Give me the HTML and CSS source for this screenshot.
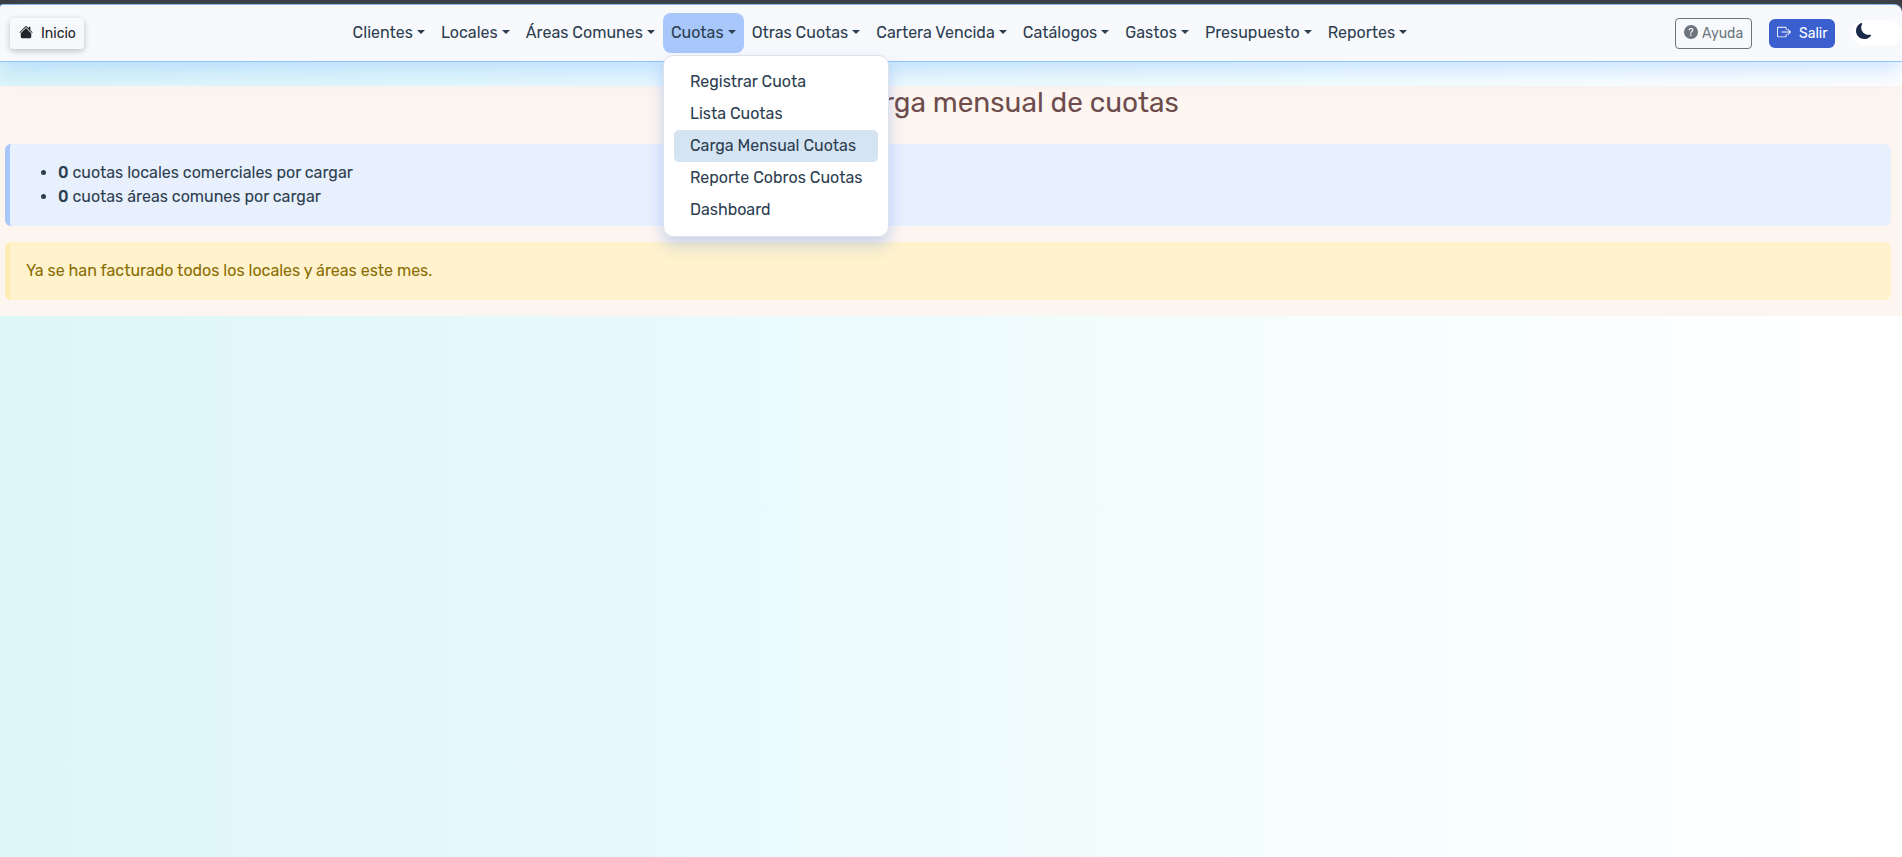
FILE: index.html
```html
<!DOCTYPE html>
<html lang="es">
<head>
<meta charset="utf-8">
<title>Carga mensual de cuotas</title>
<link rel="stylesheet" href="styles.css">
</head>
<body>
<div class="topbar">
<nav class="navbar">
  <a class="btn btn-home"><svg viewBox="0 0 16 16" width="14" height="14" fill="currentColor"><path d="M8.707 1.5a1 1 0 0 0-1.414 0L.646 8.146a.5.5 0 0 0 .708.708L8 2.207l6.646 6.647a.5.5 0 0 0 .708-.708L13 5.793V2.5a.5.5 0 0 0-.5-.5h-1a.5.5 0 0 0-.5.5v1.293z"/><path d="m8 3.293 6 6V13.5a1.500 1.500 0 0 1-1.500 1.500h-9A1.500 1.500 0 0 1 2 13.500V9.293z"/></svg><span>Inicio</span></a>
  <ul class="menu">
    <li class="item"><span>Clientes</span></li>
    <li class="item"><span>Locales</span></li>
    <li class="item"><span>Áreas Comunes</span></li>
    <li class="item active"><span>Cuotas</span>
      <ul class="dropdown">
        <li>Registrar Cuota</li>
        <li>Lista Cuotas</li>
        <li class="current">Carga Mensual Cuotas</li>
        <li>Reporte Cobros Cuotas</li>
        <li>Dashboard</li>
      </ul>
    </li>
    <li class="item"><span>Otras Cuotas</span></li>
    <li class="item"><span>Cartera Vencida</span></li>
    <li class="item"><span>Catálogos</span></li>
    <li class="item"><span>Gastos</span></li>
    <li class="item"><span>Presupuesto</span></li>
    <li class="item"><span>Reportes</span></li>
  </ul>
  <div class="actions">
    <a class="btn btn-help"><svg viewBox="0 0 16 16" width="14" height="14" fill="currentColor"><path d="M16 8A8 8 0 1 1 0 8a8 8 0 0 1 16 0M5.496 6.033h.825c.138 0 .248-.113.266-.25.09-.656.540-1.134 1.342-1.134.686 0 1.314.343 1.314 1.168 0 .635-.374.927-.965 1.371-.673.489-1.206 1.060-1.168 1.987l.003.217a.25.25 0 0 0 .25.246h.811a.25.25 0 0 0 .25-.25v-.105c0-.718.273-.927 1.010-1.486.609-.463 1.244-.977 1.244-2.056 0-1.511-1.276-2.241-2.673-2.241-1.267 0-2.655.590-2.750 2.286a.237.237 0 0 0 .241.247m2.325 6.443c.610 0 1.029-.394 1.029-.927 0-.552-.420-.940-1.029-.940-.584 0-1.009.388-1.009.940 0 .533.425.927 1.010.927z"/></svg><span>Ayuda</span></a>
    <a class="btn btn-exit"><svg viewBox="0 0 16 16" width="14" height="14" fill="currentColor"><path fill-rule="evenodd" d="M10 12.500a.5.5 0 0 1-.5.5h-8a.5.5 0 0 1-.5-.5v-9a.5.5 0 0 1 .5-.5h8a.5.5 0 0 1 .5.5v2a.5.5 0 0 0 1 0v-2A1.500 1.500 0 0 0 9.500 2h-8A1.500 1.500 0 0 0 0 3.500v9A1.500 1.500 0 0 0 1.500 14h8a1.500 1.500 0 0 0 1.500-1.500v-2a.5.5 0 0 0-1 0z"/><path fill-rule="evenodd" d="M15.854 8.354a.5.5 0 0 0 0-.708l-3-3a.5.5 0 0 0-.708.708L14.293 7.500H5.500a.5.5 0 0 0 0 1h8.793l-2.147 2.146a.5.5 0 0 0 .708.708z"/></svg><span>Salir</span></a>
    <div class="theme"><svg viewBox="0 0 16 16" width="16" height="16" fill="currentColor"><path d="M6 .278a.77.77 0 0 1 .080.858 7.200 7.200 0 0 0-.878 3.460c0 4.021 3.278 7.277 7.318 7.277q.792-.001 1.533-.160a.79.79 0 0 1 .810.316.73.73 0 0 1-.031.893A8.350 8.350 0 0 1 8.344 16C3.734 16 0 12.286 0 7.710 0 4.266 2.114 1.312 5.124.060A.75.75 0 0 1 6 .278"/></svg></div>
  </div>
</nav>
</div>
<main class="content">
  <h1>Carga mensual de cuotas</h1>
  <section class="alert info">
    <ul>
      <li><b>0</b> cuotas locales comerciales por cargar</li>
      <li><b>0</b> cuotas áreas comunes por cargar</li>
    </ul>
  </section>
  <section class="alert warning">Ya se han facturado todos los locales y áreas este mes.</section>
</main>
</body>
</html>
```
FILE: styles.css
```css
* { box-sizing: border-box; }
body {
  margin: 0;
  height: 857px;
  overflow: hidden;
  font: 16px/24px Rubik, Roboto, sans-serif;
  color: #2c3e50;
  background: linear-gradient(90deg, #ddf6f8 0%, #e8f9fe 34%, #f1fcfc 57%, #f8feff 75%, #fff 98%);
}
ul { list-style: none; margin: 0; padding: 0; }
.topbar {
  height: 62px;
  padding-top: 4px;
  margin-bottom: 24px;
  background: linear-gradient(#3a3a3a 0 14px, transparent 14px);
}
.navbar {
  position: relative;
  z-index: 2;
  height: 58px;
  display: flex;
  align-items: flex-start;
  background: #f8f9fc;
  border-top: 1px solid #85b7ee;
  border-bottom: 1px solid #90c2fb;
  border-radius: 3px 8px 0 0;
  box-shadow: 0 8px 24px rgba(100, 170, 255, .34);
}
.btn { display: flex; align-items: center; font-size: 14px; line-height: 21px; }
.btn svg { flex: none; position: relative; top: -1.5px; }
.btn-home {
  width: 74px;
  height: 31px;
  margin: 13px 0 0 10px;
  padding: 0 9px;
  gap: 8px;
  color: #212529;
  background: #f8f9fc;
  border-radius: 4px;
  box-shadow: 0 2px 6px rgba(0, 0, 0, .24);
}
.menu { display: flex; margin: 8px 0 0 260.6px; }
.item {
  position: relative;
  flex: none;
  height: 40px;
  padding: 8px;
  white-space: nowrap;
}
.item > span::after {
  content: "";
  display: inline-block;
  margin-left: .255em;
  vertical-align: .255em;
  border-top: .3em solid;
  border-right: .3em solid transparent;
  border-left: .3em solid transparent;
}
.active { background: #a8c7fa; border-radius: 8px; }
.dropdown {
  position: absolute;
  top: 42px;
  left: 0;
  z-index: 5;
  width: 226px;
  height: 182px;
  padding: 10px;
  background: #fff;
  border: 1px solid #dee2e6;
  border-radius: 10px;
  box-shadow: 0 8px 16px rgba(80, 130, 230, .3);
}
.dropdown li { height: 32px; padding: 4px 16px; border-radius: 5px; }
.dropdown .current { background: #d5e4f3; }
.actions { display: flex; align-items: flex-start; margin-left: auto; }
.btn-help {
  width: 77px;
  height: 31px;
  margin-top: 13px;
  padding: 0 8px;
  gap: 4px;
  color: #6c757d;
  border: 1px solid #6c757d;
  border-radius: 4px;
}
.btn-exit {
  width: 66px;
  height: 29px;
  margin: 14px 0 0 17px;
  padding: 0 8px;
  gap: 8px;
  color: #fff;
  background: #3c5fcf;
  border-radius: 6px;
}
.theme {
  width: 50px;
  height: 26px;
  margin: 15px 0 0 17px;
  padding: 3px 4px;
  line-height: 0;
  color: #1b2a49;
  background: #fff;
  border-radius: 13px;
}
.content {
  height: 230px;
  padding: 0 11px 0 5px;
  background: #fdf5f0;
}
h1 {
  margin: 0;
  height: 58px;
  padding-left: 132px;
  font-size: 28px;
  line-height: 33px;
  font-weight: 400;
  text-align: center;
  color: #6d4c4c;
}
.alert { border-radius: 6px; }
.info {
  height: 82px;
  padding: 17px 16px 17px 48px;
  background: #e8effd;
  border-left: 5px solid #a8c7fa;
}
.info li { position: relative; height: 24px; }
.info li::before {
  content: "";
  position: absolute;
  left: -17px;
  top: 9px;
  width: 5px;
  height: 5px;
  border-radius: 50%;
  background: currentColor;
}
.info b { font-weight: 500; }
.warning {
  height: 58px;
  margin-top: 16px;
  padding: 17px 16px;
  color: #8a6d00;
  background: #fff2cd;
  border-left: 5px solid #ffecb5;
}
```
